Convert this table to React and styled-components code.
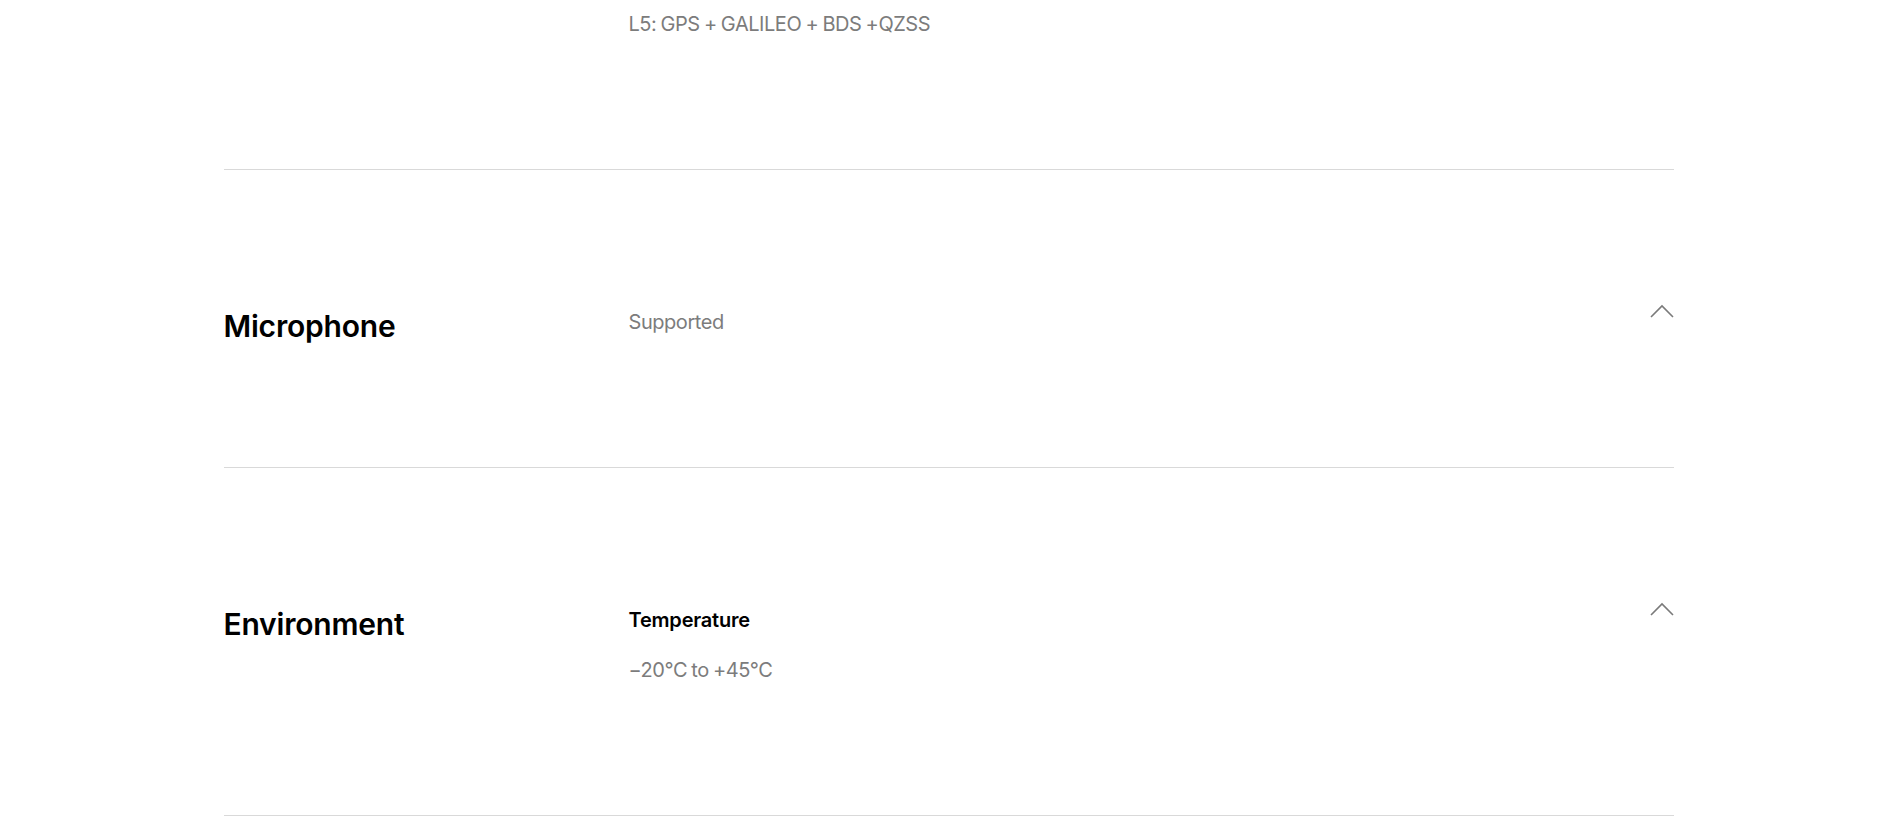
import React from 'react'
import styled, { createGlobalStyle } from 'styled-components'

const GlobalStyle = createGlobalStyle`
    html, body {
        margin: 0;
        padding: 0;
        background: #ffffff;
        font-family: Inter, "Noto Sans", "Liberation Sans", sans-serif;
        -webkit-font-smoothing: antialiased;
    }
`

const specs = [
    {
        title: '',
        partial: true,
        items: [{ value: 'L5: GPS + GALILEO + BDS +QZSS' }],
    },
    {
        title: 'Microphone',
        items: [{ value: 'Supported' }],
    },
    {
        title: 'Environment',
        items: [{ label: 'Temperature', value: '−20°C to +45°C' }],
    },
]

const Chevron = () => (
    <ChevronIcon viewBox="0 0 24 14" fill="none">
        <path d="M1 13L12 2L23 13" stroke="#7a7a7a" strokeWidth="1.6" />
    </ChevronIcon>
)

const SpecRow = ({ title, items, partial }) => (
    <Row $partial={partial}>
        <Title>{title}</Title>
        <Values>
            {items.map((item, i) => (
                <Item key={i}>
                    {item.label && <Label>{item.label}</Label>}
                    <Value>{item.value}</Value>
                </Item>
            ))}
        </Values>
        {!partial && <Chevron />}
    </Row>
)

const App = () => {
    return (
        <>
            <GlobalStyle />
            <Page>
                <SpecList>
                    {specs.map((spec, i) => (
                        <SpecRow key={i} {...spec} />
                    ))}
                </SpecList>
            </Page>
        </>
    )
}

const Page = styled.main`
    width: 100%;
    min-height: 100vh;
    background: #ffffff;
`

const SpecList = styled.section`
    width: 1450px;
    margin: 0 auto;
`

const Row = styled.div`
    display: flex;
    align-items: flex-start;
    padding: ${p => (p.$partial ? '8px 0 121px' : '136px 0 121px')};
    border-bottom: 1px solid #d9d9d9;
`

const Title = styled.h3`
    flex: 0 0 405px;
    margin: 0;
    font-size: 30px;
    line-height: 40px;
    font-weight: 600;
    color: #000000;
    letter-spacing: -0.2px;
`

const Values = styled.div`
    flex: 1;
    display: flex;
    flex-direction: column;
`

const Item = styled.div`
    display: flex;
    flex-direction: column;
    gap: 18px;
    margin-bottom: 8px;
`

const Label = styled.div`
    font-size: 20px;
    line-height: 32px;
    font-weight: 600;
    color: #000000;
    letter-spacing: -0.2px;
`

const Value = styled.div`
    font-size: 20px;
    line-height: 32px;
    font-weight: 400;
    color: #7c7c7c;
    letter-spacing: -0.45px;
    word-spacing: -1px;
`

const ChevronIcon = styled.svg`
    flex: 0 0 24px;
    width: 24px;
    height: 14px;
    margin-top: -2px;
`

export default App
